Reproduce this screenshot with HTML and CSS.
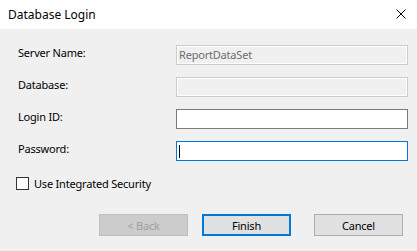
FILE: index.html
```html
<!DOCTYPE html>
<html lang="en">
<head>
    <meta charset="UTF-8">
    <meta name="viewport" content="width=device-width, initial-scale=1.0">
    <title>Database Login</title>
    <link rel="stylesheet" href="styles.css">
</head>
<body>
    <div class="window">
        <div class="titlebar">
            <span class="title">Database Login</span>
            <svg class="close" width="10" height="10" viewBox="0 0 10 10">
                <path d="M0.5 0.5 L9.5 9.5 M9.5 0.5 L0.5 9.5" stroke="#000" stroke-width="1" fill="none"/>
            </svg>
        </div>
        <div class="content">
            <div class="row">
                <label class="label">Server Name:</label>
                <div class="field disabled">ReportDataSet</div>
            </div>
            <div class="row">
                <label class="label">Database:</label>
                <div class="field disabled"></div>
            </div>
            <div class="row">
                <label class="label">Login ID:</label>
                <div class="field"></div>
            </div>
            <div class="row">
                <label class="label">Password:</label>
                <div class="field focused"><span class="caret"></span></div>
            </div>
            <div class="check-row">
                <span class="checkbox"></span>
                <span class="check-label">Use Integrated Security</span>
            </div>
            <div class="buttons">
                <div class="btn btn-disabled">&lt; Back</div>
                <div class="btn btn-default">Finish</div>
                <div class="btn">Cancel</div>
            </div>
        </div>
    </div>
</body>
</html>
```

FILE: styles.css
```css
body {
    margin: 0;
    font-family: "Noto Sans", "DejaVu Sans", sans-serif;
    font-size: 11px;
    letter-spacing: -0.2px;
    color: #000;
}

.window {
    width: 417px;
    height: 251px;
    background-color: #f0f0f0;
    display: flex;
    flex-direction: column;
}

.titlebar {
    height: 29px;
    background-color: #fff;
    display: flex;
    align-items: center;
    justify-content: space-between;
    padding: 0 11px 0 8px;
}

.title {
    font-size: 12px;
    letter-spacing: 0;
    margin-top: -1px;
}

.close {
    margin-top: -1px;
}

.content {
    padding: 16px 0 0 18px;
    display: flex;
    flex-direction: column;
    gap: 12px;
}

.row {
    display: flex;
    height: 20px;
}

.label {
    width: 158px;
    line-height: 15px;
}

.field {
    width: 232px;
    height: 20px;
    box-sizing: border-box;
    background-color: #fff;
    border: 1px solid #7a7a7a;
    padding: 0 2px;
    line-height: 18px;
    display: flex;
    align-items: center;
}

.field.disabled {
    background-color: #f0f0f0;
    border-color: #cccccc;
    box-shadow: inset 0 0 0 1px #fff;
    color: #6d6d6d;
}

.field.focused {
    border-color: #0078d7;
}

.caret {
    width: 1px;
    height: 13px;
    background-color: #000;
}

.check-row {
    display: flex;
    align-items: center;
    margin-top: 4px;
    margin-left: -2px;
    height: 13px;
}

.checkbox {
    width: 13px;
    height: 13px;
    box-sizing: border-box;
    border: 1px solid #333;
    background-color: #fff;
    margin-right: 5px;
}

.buttons {
    display: flex;
    margin-top: 12px;
    margin-left: 81px;
}

.btn {
    width: 89px;
    height: 22px;
    box-sizing: border-box;
    background-color: #e1e1e1;
    border: 1px solid #adadad;
    display: flex;
    align-items: center;
    justify-content: center;
}

.btn-disabled {
    background-color: #cccccc;
    border-color: #bfbfbf;
    color: #a0a0a0;
}

.btn-default {
    border: 2px solid #0078d7;
    margin-left: 14px;
}

.btn-default + .btn {
    margin-left: 23px;
}
```
